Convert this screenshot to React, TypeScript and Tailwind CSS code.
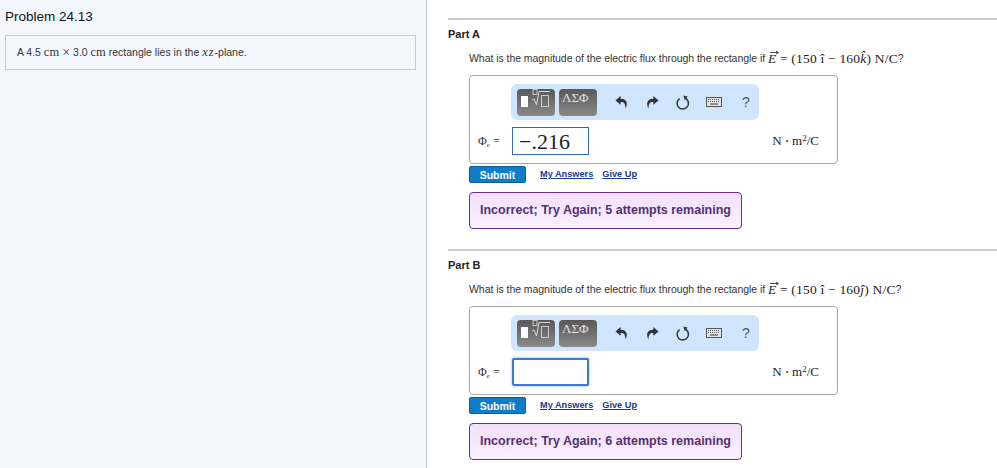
import React from 'react';

const serif = "font-['Liberation_Serif',serif]";

const ReplyIcon: React.FC<{ flip?: boolean }> = ({ flip }) => (
  <svg width="13" height="14" viewBox="0 0 12 13" className={flip ? '-scale-x-100' : ''}>
    <path d="M5.2 1 L0.4 5 L5.2 9 V6.6 C8 6.4 9.6 7.6 9.7 12.4 C11.8 8.8 12 3.6 5.2 3.4 Z" fill="#333" />
  </svg>
);

const ResetIcon: React.FC = () => (
  <svg width="14" height="15" viewBox="0 0 14 15">
    <path d="M9.6 3.4 A5.7 5.7 0 1 1 3.6 3.6" fill="none" stroke="#333" strokeWidth="1.5" />
    <path d="M7.4 0.4 L11.6 1.6 L8.8 5.2 Z" fill="#333" />
  </svg>
);

const KeyboardIcon: React.FC = () => (
  <svg width="16" height="10" viewBox="0 0 16 10">
    <rect x="0.5" y="0.5" width="15" height="9" fill="#e6e6e6" stroke="#555" />
    <path d="M2 2.5H14M2 4.5H14" stroke="#555" strokeDasharray="1 1" fill="none" />
    <path d="M4 7H12" stroke="#555" fill="none" strokeWidth="1.2" />
  </svg>
);

const Templates: React.FC = () => (
  <div className="relative h-[27px] w-[38px] overflow-hidden rounded-[4px] bg-gradient-to-b from-[#595959] to-[#8a8a8a]">
    <div className="absolute left-[4px] top-[7px] h-[11px] w-[7px] bg-white" />
    <svg width="22" height="22" viewBox="0 0 22 22" className="absolute left-[15px] top-0">
      <rect x="1" y="0.5" width="4" height="5" fill="none" stroke="#c9c9c9" />
      <path d="M0 11 L2 10 L4.5 16 L7 2.5 H18" fill="none" stroke="#d6d6d6" strokeWidth="1" />
      <rect x="9.5" y="6.5" width="7" height="11" fill="none" stroke="#c9c9c9" />
    </svg>
  </div>
);

const Symbols: React.FC = () => (
  <div className={`h-[27px] w-[38px] overflow-hidden rounded-[4px] bg-gradient-to-b from-[#595959] to-[#8a8a8a] pl-[3px] pt-[2px] text-[13px] leading-[14px] text-[#e2e2e2] ${serif}`}>
    ΛΣΦ
  </div>
);

const Toolbar: React.FC = () => (
  <div className="ml-[41px] flex h-[36px] w-[248px] items-center rounded-[6px] bg-[#cfe4fd] pl-[6px]">
    <Templates />
    <div className="ml-[4px]"><Symbols /></div>
    <div className="ml-[18px] flex w-[13px] justify-center"><ReplyIcon /></div>
    <div className="ml-[18px] flex w-[13px] justify-center"><ReplyIcon flip /></div>
    <div className="ml-[17px] flex w-[14px] justify-center"><ResetIcon /></div>
    <div className="ml-[16px] flex w-[16px] justify-center"><KeyboardIcon /></div>
    <div className="ml-[20px] text-[14px] leading-none text-[#555]">?</div>
  </div>
);

const Vec: React.FC = () => (
  <span className={`relative italic ${serif}`}>
    <svg width="9" height="5" viewBox="0 0 9 5" className="absolute -top-[1px] left-[2px]">
      <path d="M0 2.5H8M6 1L8.5 2.5L6 4" fill="none" stroke="#222" strokeWidth="0.8" />
    </svg>
    E
  </span>
);

const Question: React.FC<{ unit: string }> = ({ unit }) => (
  <p className="ml-[21px] flex h-[16px] items-center whitespace-nowrap text-[10.5px] tracking-[-0.05px] text-[#333]">
    What is the magnitude of the electric flux through the rectangle if&nbsp;
    <span className={`text-[13.5px] tracking-[0.2px] text-[#222] ${serif}`}>
      <Vec /> = (150 <span>î</span> − 160<i>{unit}</i>) N/C
    </span>
    <span>?</span>
  </p>
);

const PartSection: React.FC<{
  name: string;
  unit: string;
  value?: string;
  attempts: number;
  active?: boolean;
}> = ({ name, unit, value, attempts, active }) => (
  <section>
    <div className="h-[2px] bg-[#cccccc]" />
    <h2 className="mt-[7px] h-[14px] text-[11px] font-bold leading-[14px] text-[#222]">{name}</h2>
    <div className="mt-[10px]"><Question unit={unit} /></div>
    <div className="ml-[21px] mt-[8px] h-[89px] w-[369px] rounded-[4px] border border-[#a9a9a9] bg-white pt-[8px]">
      <Toolbar />
      <div className="mt-[7px] flex items-center">
        <span className={`ml-[8px] w-[34px] text-[12px] text-[#333] ${serif}`}>
          Φ<sub className="text-[7px] italic">e</sub> =
        </span>
        <div
          className={`flex h-[28px] w-[77px] items-center bg-white pl-[6px] text-[22px] text-[#222] ${serif} ${
            active
              ? 'rounded-[2px] border-2 border-[#3b78d8] shadow-[0_0_3px_#8ab4f0]'
              : 'border border-[#2f69bd]'
          }`}
        >
          {value}
        </div>
        <span className={`ml-auto mr-[18px] text-[13px] text-[#222] ${serif}`}>
          N ⋅ m<sup className="text-[9px]">2</sup>/C
        </span>
      </div>
    </div>
    <div className="ml-[21px] mt-[2px] flex items-center">
      <button className="h-[17px] w-[57px] rounded-[2px] border border-[#0a5f9e] bg-[#0f7cc8] text-center text-[10.5px] font-bold leading-[14px] text-white">
        Submit
      </button>
      <a className="ml-[14px] mt-[1px] text-[9.2px] font-bold text-[#1a3c8f] underline">My Answers</a>
      <a className="ml-[9px] mt-[1px] text-[9.2px] font-bold text-[#1a3c8f] underline">Give Up</a>
    </div>
    <div className="ml-[21px] mt-[9px] flex h-[37px] w-[273px] items-center rounded-[4px] border border-[#6b2c91] bg-gradient-to-b from-[#f3e0fc] to-[#fbf0fe] pl-[10px] text-[12.5px] font-bold text-[#55306f]">
      Incorrect; Try Again; {attempts} attempts remaining
    </div>
  </section>
);

export default function App() {
  return (
    <div className="flex h-[468px] w-[997px] overflow-hidden bg-white font-['Liberation_Sans',Arial,sans-serif]">
      <aside className="h-full w-[427px] shrink-0 border-r border-[#bccbdf] bg-[#f4f8fe] px-[5px] pt-[8px]">
        <h1 className="h-[18px] text-[13.5px] leading-[18px] text-[#111]">Problem 24.13</h1>
        <div className="mt-[9px] flex h-[35px] w-[411px] items-center border border-[#bccbdf] pl-[11px] text-[10.5px] text-[#333]">
          A 4.5&nbsp;<span className={`text-[12.5px] ${serif}`}>cm</span>
          <span className={`mx-[3px] text-[14px] ${serif}`}>×</span>3.0&nbsp;
          <span className={`text-[12.5px] ${serif}`}>cm</span>&nbsp;rectangle lies in the&nbsp;
          <i className={`text-[12.5px] tracking-[1px] ${serif}`}>xz</i>-plane.
        </div>
      </aside>
      <main className="flex-1 pl-[21px] pt-[18px]">
        <PartSection name="Part A" unit="k̂" value="−.216" attempts={5} />
        <div className="mt-[20px]">
          <PartSection name="Part B" unit="ĵ" attempts={6} active />
        </div>
      </main>
    </div>
  );
}
